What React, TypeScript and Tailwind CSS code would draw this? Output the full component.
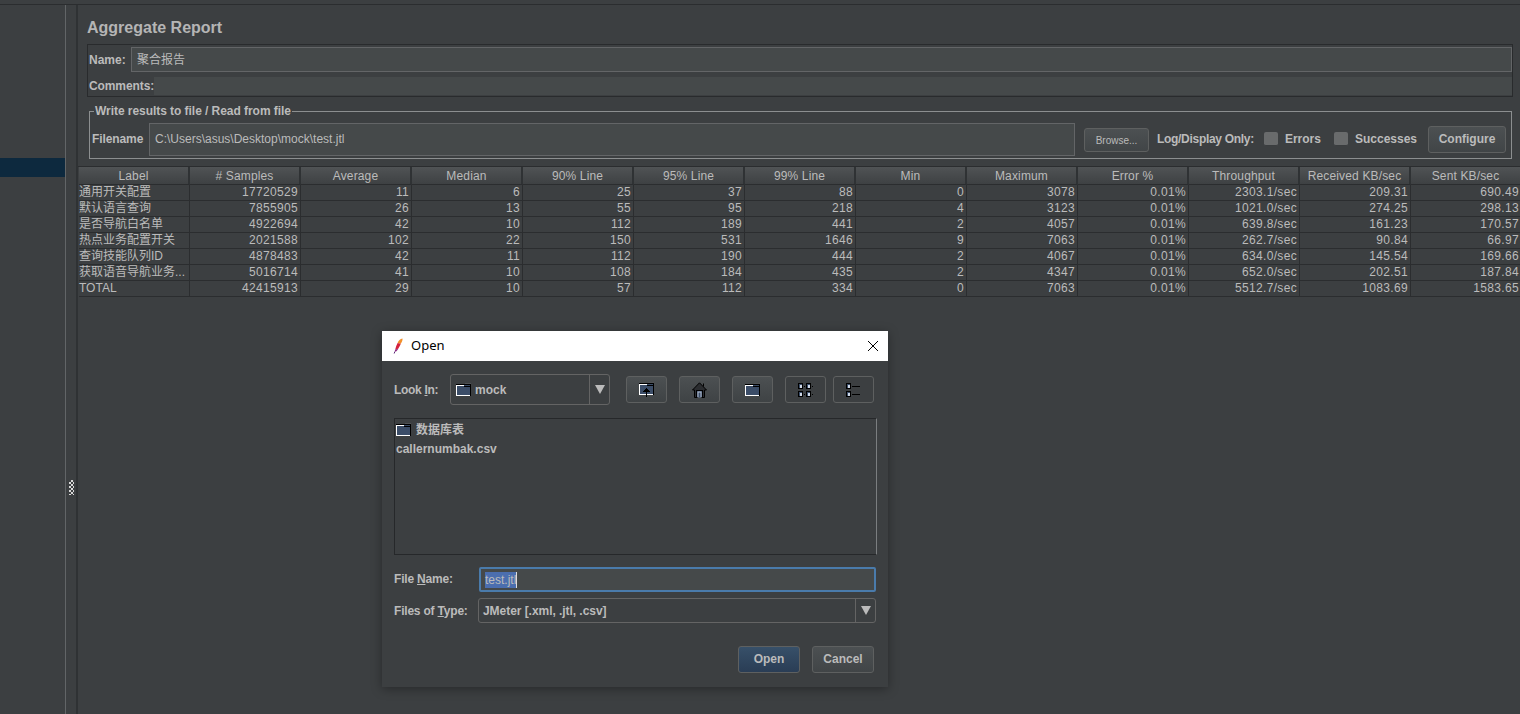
const font = "font-['Liberation_Sans','Noto_Sans_CJK_SC',sans-serif]";

const columns = ["Label", "# Samples", "Average", "Median", "90% Line", "95% Line", "99% Line", "Min", "Maximum", "Error %", "Throughput", "Received KB/sec", "Sent KB/sec"];

const rows = [
  ["通用开关配置", "17720529", "11", "6", "25", "37", "88", "0", "3078", "0.01%", "2303.1/sec", "209.31", "690.49"],
  ["默认语言查询", "7855905", "26", "13", "55", "95", "218", "4", "3123", "0.01%", "1021.0/sec", "274.25", "298.13"],
  ["是否导航白名单", "4922694", "42", "10", "112", "189", "441", "2", "4057", "0.01%", "639.8/sec", "161.23", "170.57"],
  ["热点业务配置开关", "2021588", "102", "22", "150", "531", "1646", "9", "7063", "0.01%", "262.7/sec", "90.84", "66.97"],
  ["查询技能队列ID", "4878483", "42", "11", "112", "190", "444", "2", "4067", "0.01%", "634.0/sec", "145.54", "169.66"],
  ["获取语音导航业务...", "5016714", "41", "10", "108", "184", "435", "2", "4347", "0.01%", "652.0/sec", "202.51", "187.84"],
  ["TOTAL", "42415913", "29", "10", "57", "112", "334", "0", "7063", "0.01%", "5512.7/sec", "1083.69", "1583.65"],
];

function FolderShape() {
  return (
    <g>
      <rect x="9" y="0" width="6" height="2" fill="#505356" />
      <rect x="0" y="1" width="15" height="1" fill="#000" />
      <rect x="0" y="2" width="15" height="11" fill="#3b4d68" />
      <rect x="0" y="2" width="8" height="1" fill="#fff" />
      <rect x="8" y="3" width="7" height="1" fill="#000" />
      <rect x="0" y="2" width="1" height="11" fill="#fff" />
      <rect x="0" y="12" width="15" height="1" fill="#fff" />
      <rect x="14" y="2" width="1" height="11" fill="#000" />
    </g>
  );
}

function FolderIcon() {
  return (
    <svg width="15" height="13" viewBox="0 0 15 13" shapeRendering="crispEdges">
      <FolderShape />
    </svg>
  );
}

function UpFolderIcon() {
  return (
    <svg width="15" height="15" viewBox="0 0 15 15" shapeRendering="crispEdges">
      <FolderShape />
      <rect x="7" y="6" width="1" height="9" fill="#000" />
      <rect x="6" y="7" width="3" height="1" fill="#000" />
      <rect x="5" y="8" width="5" height="1" fill="#000" />
      <rect x="4" y="9" width="7" height="1" fill="#000" />
    </svg>
  );
}

function HomeIcon() {
  return (
    <svg width="15" height="16" viewBox="0 0 15 16">
      <path d="M11.5 1.5v3M7.5 .8 .5 8h2V15.5h10V8h2Z" fill="#2b2d30" stroke="#000" strokeWidth="1" />
      <rect x="4.5" y="8.5" width="6" height="7" fill="#3b4d68" stroke="#000" />
      <rect x="5.5" y="9.5" width="4" height="6" fill="#b9c3d3" />
      <rect x="6.5" y="10.5" width="2" height="5" fill="#3b4d68" />
    </svg>
  );
}

function Cell() {
  return (
    <g>
      <rect x="0.5" y="0.5" width="4" height="5" fill="#3b4d68" stroke="#000" />
      <rect x="1.5" y="1.5" width="2" height="3" fill="#cfd8e6" />
    </g>
  );
}

function ThumbsIcon() {
  return (
    <svg width="16" height="14" viewBox="0 0 16 14" shapeRendering="crispEdges">
      <Cell />
      <g transform="translate(8 0)"><Cell /></g>
      <g transform="translate(0 8)"><Cell /></g>
      <g transform="translate(8 8)"><Cell /></g>
      <rect x="6" y="3" width="1" height="1" fill="#000" />
      <rect x="14" y="3" width="1" height="1" fill="#000" />
      <rect x="6" y="11" width="1" height="1" fill="#000" />
      <rect x="14" y="11" width="1" height="1" fill="#000" />
    </svg>
  );
}

function ListIcon() {
  return (
    <svg width="15" height="14" viewBox="0 0 15 14" shapeRendering="crispEdges">
      <Cell />
      <g transform="translate(0 8)"><Cell /></g>
      <rect x="6" y="3" width="8" height="1" fill="#000" />
      <rect x="6" y="11" width="8" height="1" fill="#000" />
    </svg>
  );
}

function Feather() {
  return (
    <svg width="10" height="16" viewBox="0 0 10 16">
      <path d="M9.5 .5C7.2 1 5.4 2.6 4.6 5L7.8 5.8C9 3.8 9.8 2.2 9.5 .5Z" fill="#f2902a" />
      <path d="M4.6 5C3.6 7 2.8 9 2.2 11.4L5.2 10.8C6.2 9 7.2 7.4 7.8 5.8Z" fill="#d4213c" />
      <path d="M2.2 11.4C1.9 12.2 1.8 13 1.8 13.8L3.4 13.2C4.2 12.6 4.8 11.6 5.2 10.8Z" fill="#8c2a82" />
      <path d="M1.8 13.6 1.2 15.5" fill="none" stroke="#5b2a78" strokeWidth="1" />
    </svg>
  );
}

function ToolButton({ raised, children, className = "" }: { raised?: boolean; children: React.ReactNode; className?: string }) {
  return (
    <div
      className={
        "flex h-[27px] w-[41px] items-center justify-center rounded-[3px] border border-[#5e6060] " +
        (raised ? "bg-gradient-to-b from-[#4c5052] to-[#3f4345] " : "bg-[#3c3f41] ") +
        className
      }
    >
      {children}
    </div>
  );
}

function ArrowDown() {
  return <div className="h-0 w-0 border-x-[5px] border-t-[9px] border-x-transparent border-t-[#bbbbbb]" />;
}

function Check({ label, className = "" }: { label: string; className?: string }) {
  return (
    <div className={"flex items-center pb-[1px] " + className}>
      <div className="h-[14px] w-[14px] rounded-[2px] border-b border-[#3a3d3f] bg-[#696b6c]" />
      <span className="ml-[7px] font-bold">{label}</span>
    </div>
  );
}

export default function App() {
  return (
    <div className={"relative flex h-[714px] w-[1520px] flex-col overflow-hidden bg-[#3c3f41] text-[12px] text-[#bbbbbb] " + font}>
      <div className="h-[4px] bg-[#3c3f41]" />
      <div className="flex flex-1 border-t border-[#2b2d2f]">
        {/* tree */}
        <div className="w-[65px] pt-[153px]">
          <div className="h-[19px] bg-[#0d293e]" />
        </div>
        {/* splitter */}
        <div className="w-[11px] border-l border-[#626567] pl-[3px] pt-[475px]">
          <div className="h-[15px] w-[5px] bg-[conic-gradient(#d8d8d8_25%,#3c3f41_0_50%,#d8d8d8_0_75%,#3c3f41_0)] bg-[length:4px_4px]" />
        </div>
        {/* report */}
        <div className="min-w-0 flex-1 border-l-2 border-[#2f3234]">
          <div className="pl-[9px] pr-[7px]">
            <h1 className="mt-[13px] h-[20px] text-[16px] font-bold leading-[20px] text-[#b5b5b5]">Aggregate Report</h1>

            <div className="mt-[6px] h-[53px] border-x border-y border-[#292b2d] pl-[1px]">
              <div className="mt-[2px] flex h-[25px] items-center">
                <span className="w-[42px] font-bold">Name:</span>
                <div className="flex h-[25px] flex-1 items-center border border-[#636567] bg-[#45494a] px-[5px]">聚合报告</div>
              </div>
              <div className="mt-[5px] flex h-[18px] items-center">
                <span className="w-[65px] font-bold tracking-[-0.1px]">Comments:</span>
                <div className="h-[18px] flex-1 bg-[#45494a]" />
              </div>
            </div>

            <fieldset className="ml-[2px] mt-[7px] h-[55px] w-[1423px] border border-[#8c8f90] pl-[2px]">
              <legend className="ml-[2px] px-[1px] font-bold leading-[14px] tracking-[-0.05px]">Write results to file / Read from file</legend>
              <div className="mt-[5px] flex items-center">
                <span className="w-[57px] pb-[1px] font-bold tracking-[-0.1px]">Filename</span>
                <div className="flex h-[33px] w-[926px] items-center border border-[#636567] bg-[#45494a] px-[5px] pb-[1px]">C:\Users\asus\Desktop\mock\test.jtl</div>
                <div className="ml-[9px] flex h-[24px] w-[65px] items-center justify-center rounded-[3px] border border-[#5e6060] bg-gradient-to-b from-[#4c5052] to-[#414547] pt-[1px] text-[10px]">Browse...</div>
                <span className="ml-[8px] pb-[1px] font-bold tracking-[-0.3px]">Log/Display Only:</span>
                <Check label="Errors" className="ml-[10px]" />
                <Check label="Successes" className="ml-[13px]" />
                <div className="ml-[11px] flex h-[27px] w-[78px] items-center justify-center rounded-[3px] border border-[#5e6060] bg-gradient-to-b from-[#4c5052] to-[#414547] pb-[2px] font-bold">Configure</div>
              </div>
            </fieldset>
          </div>

          <div className="mt-[7px] border-t border-[#2b2d2f] pl-[1px]">
            <div className="grid grid-cols-[repeat(13,111px)]">
              {columns.map((c) => (
                <div key={c} className="flex h-[18px] items-center justify-center border-r-2 border-b border-r-[#2f3234] border-b-[#2b2d2f] bg-gradient-to-b from-[#505355] to-[#3e4143] tracking-[0.15px]">
                  {c}
                </div>
              ))}
              {rows.map((row) =>
                row.map((v, i) => (
                  <div
                    key={row[0] + i}
                    className={
                      "flex h-[16px] items-center whitespace-nowrap border-r border-b border-[#2b2d2f] pb-[1px] pr-[2px] " +
                      (i === 0 ? "justify-start tracking-normal" : "justify-end tracking-[0.33px]")
                    }
                  >
                    {v}
                  </div>
                ))
              )}
            </div>
          </div>
        </div>
      </div>

      {/* Open dialog */}
      <div className="absolute left-[382px] top-[331px] flex h-[356px] w-[506px] flex-col bg-[#3c3f41] shadow-[0_2px_10px_rgba(0,0,0,0.35)]">
        <div className="flex h-[30px] items-center bg-white pl-[11px] pr-[9px] text-[13px] text-black">
          <Feather />
          <span className="ml-[8px] font-['Noto_Sans',sans-serif]">Open</span>
          <svg width="12" height="12" viewBox="0 0 12 12" className="ml-auto">
            <path d="M1 1 11 11M11 1 1 11" stroke="#000" strokeWidth="1" />
          </svg>
        </div>

        <div className="flex flex-1 flex-col px-[12px] pt-[13px]">
          <div className="flex items-center">
            <span className="w-[56px] font-bold tracking-[-0.3px]">Look <span className="underline">I</span>n:</span>
            <div className="flex h-[31px] w-[160px] items-center rounded-[3px] border border-[#646464]">
              <div className="flex flex-1 items-center pl-[5px] font-bold">
                <FolderIcon />
                <span className="ml-[4px]">mock</span>
              </div>
              <div className="flex h-full w-[20px] items-center justify-center border-l border-[#646464]"><ArrowDown /></div>
            </div>
            <div className="ml-[16px] flex items-center gap-[12px]">
              <ToolButton raised><UpFolderIcon /></ToolButton>
              <ToolButton raised><HomeIcon /></ToolButton>
              <ToolButton raised><FolderIcon /></ToolButton>
              <ToolButton><ThumbsIcon /></ToolButton>
              <ToolButton className="ml-[-5px]"><ListIcon /></ToolButton>
            </div>
          </div>

          <div className="mt-[13px] h-[137px] w-[483px] border border-[#26282a] border-r-[#7b7e80] pl-[1px] font-bold">
            <div className="flex h-[20px] items-center pt-[1px]">
              <FolderIcon />
              <span className="ml-[5px]">数据库表</span>
            </div>
            <div className="flex h-[20px] items-center">callernumbak.csv</div>
          </div>

          <div className="mt-[12px] flex items-center">
            <span className="w-[85px] pb-[2px] font-bold tracking-[-0.2px]">File <span className="underline">N</span>ame:</span>
            <div className="flex h-[25px] w-[397px] items-center rounded-[2px] border-2 border-[#4a7bab] bg-[#45494a] pl-[4px]">
              <span className="bg-[#4b6eaf] leading-[16px]">test.jtl</span>
              <span className="h-[16px] w-px bg-[#dddddd]" />
            </div>
          </div>

          <div className="mt-[6px] flex items-center">
            <span className="w-[85px] font-bold tracking-[-0.2px]">Files of <span className="underline">T</span>ype:</span>
            <div className="flex h-[25px] w-[398px] flex-none items-center rounded-[3px] border border-[#646464]">
              <span className="flex-1 pl-[4px] font-bold tracking-[-0.05px]">JMeter [.xml, .jtl, .csv]</span>
              <div className="flex h-full w-[20px] items-center justify-center border-l border-[#646464]"><ArrowDown /></div>
            </div>
          </div>

          <div className="mt-[23px] flex justify-end gap-[12px] pr-[2px] font-bold">
            <div className="flex h-[27px] w-[62px] items-center justify-center rounded-[3px] border border-[#5e6060] bg-gradient-to-b from-[#375069] to-[#2a3d55] pb-[1px]">Open</div>
            <div className="flex h-[27px] w-[62px] items-center justify-center rounded-[3px] border border-[#5e6060] bg-gradient-to-b from-[#4c5052] to-[#414547] pb-[1px]">Cancel</div>
          </div>
        </div>
      </div>
    </div>
  );
}
